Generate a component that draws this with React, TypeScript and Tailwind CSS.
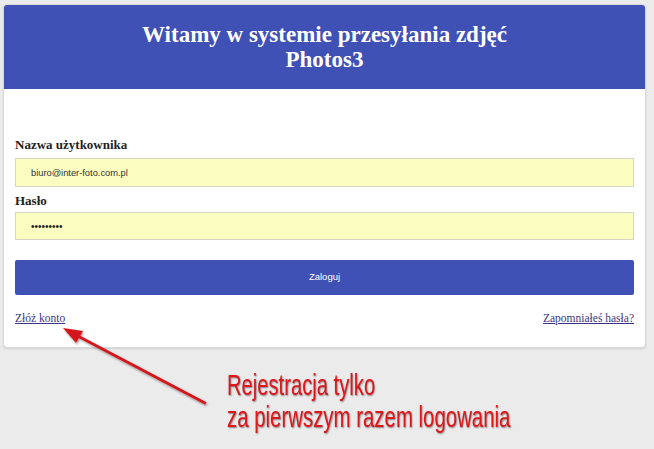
export default function App() {
  return (
    <div className="relative min-h-[449px] bg-[#ebebeb] pl-[3px] pr-[8px] pt-[4px] pb-[20px]">
      <div className="overflow-hidden rounded-[4px] border border-[#d9d9d9] bg-white shadow-[0_1px_2px_rgba(0,0,0,0.12)]">
        <header className="h-[84px] bg-[#3f51b5] pt-[17px] text-center font-['Liberation_Serif',serif] text-[23px] font-bold leading-[25px] text-white">
          <h1>Witamy w systemie przesyłania zdjęć</h1>
          <h1>Photos3</h1>
        </header>

        <form className="flex flex-col px-[11px] pt-[48px] pb-[21px]" onSubmit={(e) => e.preventDefault()}>
          <Label text="Nazwa użytkownika" />
          <input
            readOnly
            defaultValue="biuro@inter-foto.com.pl"
            className="mt-[5px] h-[29px] w-full border border-[#d6d6c4] bg-[#fafcc0] pl-[15px] font-['Liberation_Sans',Arial,sans-serif] text-[9.3px] text-[#333] outline-none"
          />
          <div className="mt-[6px]">
            <Label text="Hasło" />
          </div>
          <input
            readOnly
            type="password"
            defaultValue="123456789"
            className="mt-[3px] h-[28px] w-full border border-[#d6d6c4] bg-[#fafcc0] pl-[15px] font-['Liberation_Sans',Arial,sans-serif] text-[10px] text-[#222] outline-none"
          />
          <button
            type="submit"
            className="mt-[20px] h-[35px] w-full rounded-[2px] bg-[#3f51b5] font-['Liberation_Sans',Arial,sans-serif] text-[9.5px] text-white"
          >
            Zaloguj
          </button>
          <div className="mt-[15px] flex items-center justify-between font-['Liberation_Serif',serif] text-[11.5px] leading-[16px] text-[#3b3482]">
            <a href="#" className="underline">Złóż konto</a>
            <a href="#" className="underline">Zapomniałeś hasła?</a>
          </div>
        </form>
      </div>

      {/* annotation */}
      <div className="mt-[21px] pl-[224px] font-['Liberation_Sans',Arial,sans-serif] text-[30px] leading-[32px] text-[#e0161a] [text-shadow:1px_1px_2px_rgba(0,0,0,0.45)]">
        <p className="origin-left scale-x-[0.673] whitespace-nowrap">Rejestracja tylko</p>
        <p className="origin-left scale-x-[0.68] whitespace-nowrap">za pierwszym razem logowania</p>
      </div>

      <svg className="pointer-events-none absolute inset-0" width="654" height="449" viewBox="0 0 654 449">
        <defs>
          <filter id="sh" x="-20%" y="-20%" width="140%" height="140%">
            <feDropShadow dx="1" dy="1.5" stdDeviation="1.2" floodColor="#000" floodOpacity="0.4" />
          </filter>
        </defs>
        <g filter="url(#sh)">
          <line x1="205" y1="403" x2="74" y2="334" stroke="#d4171b" strokeWidth="2.6" strokeLinecap="round" />
          <path d="M63 328 L83 331 L76 343 Z" fill="#d4171b" />
        </g>
      </svg>
    </div>
  );
}

function Label({ text }: { text: string }) {
  return (
    <label className="block font-['Liberation_Serif',serif] text-[13px] font-bold leading-[16px] text-[#222]">
      {text}
    </label>
  );
}
